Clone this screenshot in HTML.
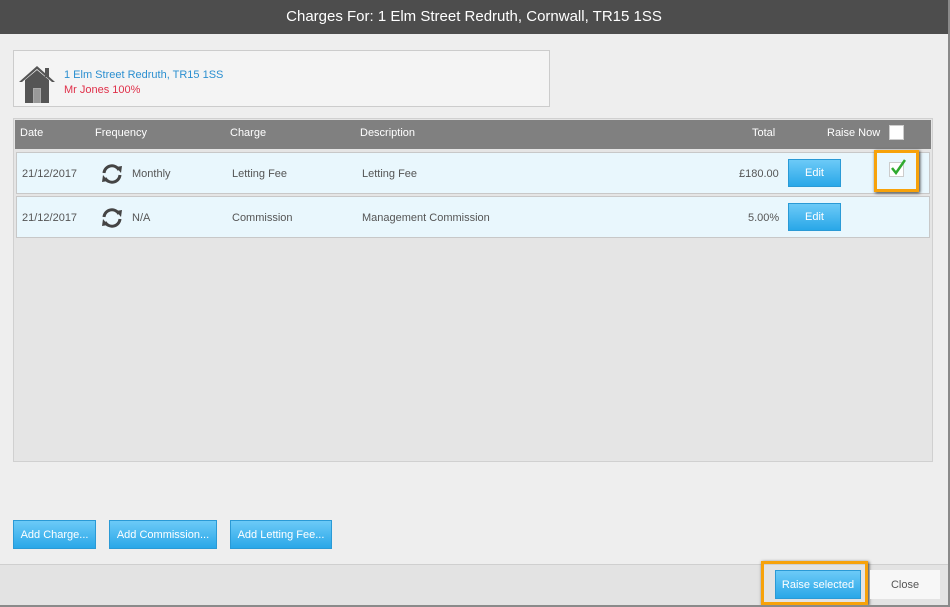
<!DOCTYPE html>
<html><head><style>
*{box-sizing:border-box;margin:0;padding:0}
body{width:950px;height:607px;background:#eeeeee;font-family:"Liberation Sans",sans-serif;position:relative;overflow:hidden;font-size:11px;color:#555}
.abs{position:absolute}
.title{left:0;top:0;width:948px;height:34px;background:#4d4d4d;color:#fff;font-size:15px;text-align:center;line-height:34px}
.rb{left:948px;top:0;width:2px;height:607px;background:#8a8a8a}
.bb{left:0;top:605px;width:950px;height:2px;background:#8a8a8a}
.prop{left:13px;top:50px;width:537px;height:57px;background:#f4f4f4;border:1px solid #ccc}
.grid{left:13px;top:118px;width:920px;height:344px;background:#e5e5e5;border:1px solid #d0d0d0}
.hdr{left:15px;top:120px;width:916px;height:29px;background:#808080;color:#fff;font-size:11px}
.hdr span,.row span{position:absolute;top:0}
.row{left:16px;width:914px;height:42px;background:#e9f7fd;border:1px solid #c8c8c8;color:#555}
.btn{position:absolute;background:linear-gradient(#6ccaf7,#29a7e8);color:#fff;text-align:center;border:1px solid #2a9ad6;font-size:11px}
.footer{left:0;top:564px;width:948px;height:41px;background:#e3e3e3;border-top:1px solid #cfcfcf}
</style></head><body>
<div class="abs title">Charges For: 1 Elm Street Redruth, Cornwall, TR15 1SS</div>
<div class="abs prop">
<svg class="abs" style="left:5px;top:14px" width="36" height="38" viewBox="0 0 36 38"><path d="M0 17 L18 1 L36 17 L33 17 L18 4 L3 17Z" fill="#555"/><rect x="26" y="3" width="4" height="9" fill="#555"/><path d="M6 15 L18 5 L30 15 V38 H6Z" fill="#555"/><rect x="14" y="23" width="8" height="15" fill="#aaa"/><rect x="15" y="24" width="6" height="14" fill="#999"/></svg>
<div class="abs" style="left:50px;top:18px;color:#2b8fd0">1 Elm Street Redruth, TR15 1SS</div>
<div class="abs" style="left:50px;top:33px;color:#e0304a">Mr Jones 100%</div>
</div>
<div class="abs grid"></div>
<div class="abs hdr">
<span style="left:5px;top:7px">Date</span><span style="left:80px;top:7px">Frequency</span><span style="left:215px;top:7px">Charge</span><span style="left:345px;top:7px">Description</span><span style="left:737px;top:7px">Total</span><span style="left:812px;top:7px">Raise Now</span>
<div class="abs" style="left:874px;top:5px;width:15px;height:15px;background:#fff;border:1px solid #ccc"></div>
</div>
<div class="abs row" style="top:152px">
<span style="left:5px;top:15px">21/12/2017</span>
<svg class="abs" style="left:83px;top:11px" width="24" height="20" viewBox="0 0 24 20"><path d="M4 9 A8 8 0 0 1 19 6" fill="none" stroke="#444" stroke-width="3"/><path d="M16 3 L22 2 L21 9Z" fill="#444"/><path d="M20 11 A8 8 0 0 1 5 14" fill="none" stroke="#444" stroke-width="3"/><path d="M8 17 L2 18 L3 11Z" fill="#444"/></svg>
<span style="left:115px;top:15px">Monthly</span><span style="left:215px;top:15px">Letting Fee</span><span style="left:345px;top:15px">Letting Fee</span><span style="left:722px;top:15px">£180.00</span>
<div class="btn" style="left:771px;top:6px;width:53px;height:28px;line-height:26px">Edit</div>
<div class="abs" style="left:857px;top:-3px;width:45px;height:42px;border:3px solid #f7a20a;box-shadow:1px 1px 3px #333"></div>
<div class="abs" style="left:872px;top:9px;width:15px;height:15px;background:#fff;border:1px solid #ccc"></div>
<svg class="abs" style="left:873px;top:6px" width="16" height="16" viewBox="0 0 16 16"><path d="M2 9 L6 14 L15 1" fill="none" stroke="#2faa2f" stroke-width="2.5"/></svg>
</div>
<div class="abs row" style="top:196px">
<span style="left:5px;top:15px">21/12/2017</span>
<svg class="abs" style="left:83px;top:11px" width="24" height="20" viewBox="0 0 24 20"><path d="M4 9 A8 8 0 0 1 19 6" fill="none" stroke="#444" stroke-width="3"/><path d="M16 3 L22 2 L21 9Z" fill="#444"/><path d="M20 11 A8 8 0 0 1 5 14" fill="none" stroke="#444" stroke-width="3"/><path d="M8 17 L2 18 L3 11Z" fill="#444"/></svg>
<span style="left:115px;top:15px">N/A</span><span style="left:215px;top:15px">Commission</span><span style="left:345px;top:15px">Management Commission</span><span style="left:731px;top:15px">5.00%</span>
<div class="btn" style="left:771px;top:6px;width:53px;height:28px;line-height:26px">Edit</div>
</div>
<div class="btn" style="left:13px;top:520px;width:83px;height:29px;line-height:28px">Add Charge...</div>
<div class="btn" style="left:109px;top:520px;width:108px;height:29px;line-height:28px">Add Commission...</div>
<div class="btn" style="left:230px;top:520px;width:102px;height:29px;line-height:28px">Add Letting Fee...</div>
<div class="abs footer"></div>
<div class="abs" style="left:761px;top:561px;width:107px;height:44px;border:3px solid #f7a20a;box-shadow:1px 1px 3px #333"></div>
<div class="btn" style="left:775px;top:570px;width:86px;height:29px;line-height:28px">Raise selected</div>
<div class="abs" style="left:870px;top:570px;width:70px;height:29px;line-height:30px;background:#f7f7f7;text-align:center;color:#555">Close</div>
<div class="abs rb"></div><div class="abs bb"></div>
</body></html>
